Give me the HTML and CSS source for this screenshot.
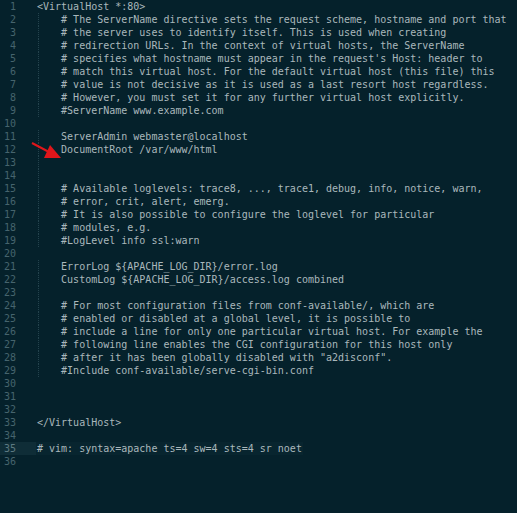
FILE: index.html
```html
<!DOCTYPE html>
<html>
<head>
<meta charset="utf-8">
<link rel="stylesheet" href="styles.css">
</head>
<body>
<div class="editor">
<div class="line"><span class="num">1</span><span class="code">&lt;VirtualHost *:80&gt;</span></div>
<div class="line g"><span class="num">2</span><span class="code">    # The ServerName directive sets the request scheme, hostname and port that</span></div>
<div class="line g"><span class="num">3</span><span class="code">    # the server uses to identify itself. This is used when creating</span></div>
<div class="line g"><span class="num">4</span><span class="code">    # redirection URLs. In the context of virtual hosts, the ServerName</span></div>
<div class="line g"><span class="num">5</span><span class="code">    # specifies what hostname must appear in the request's Host: header to</span></div>
<div class="line g"><span class="num">6</span><span class="code">    # match this virtual host. For the default virtual host (this file) this</span></div>
<div class="line g"><span class="num">7</span><span class="code">    # value is not decisive as it is used as a last resort host regardless.</span></div>
<div class="line g"><span class="num">8</span><span class="code">    # However, you must set it for any further virtual host explicitly.</span></div>
<div class="line g"><span class="num">9</span><span class="code">    #ServerName www.example.com</span></div>
<div class="line"><span class="num">10</span><span class="code"> </span></div>
<div class="line g"><span class="num">11</span><span class="code">    ServerAdmin webmaster@localhost</span></div>
<div class="line g"><span class="num">12</span><span class="code">    DocumentRoot /var/www/html</span></div>
<div class="line g"><span class="num">13</span><span class="code"> </span></div>
<div class="line g"><span class="num">14</span><span class="code"> </span></div>
<div class="line g"><span class="num">15</span><span class="code">    # Available loglevels: trace8, ..., trace1, debug, info, notice, warn,</span></div>
<div class="line g"><span class="num">16</span><span class="code">    # error, crit, alert, emerg.</span></div>
<div class="line g"><span class="num">17</span><span class="code">    # It is also possible to configure the loglevel for particular</span></div>
<div class="line g"><span class="num">18</span><span class="code">    # modules, e.g.</span></div>
<div class="line g"><span class="num">19</span><span class="code">    #LogLevel info ssl:warn</span></div>
<div class="line"><span class="num">20</span><span class="code"> </span></div>
<div class="line g"><span class="num">21</span><span class="code">    ErrorLog ${APACHE_LOG_DIR}/error.log</span></div>
<div class="line g"><span class="num">22</span><span class="code">    CustomLog ${APACHE_LOG_DIR}/access.log combined</span></div>
<div class="line g"><span class="num">23</span><span class="code"> </span></div>
<div class="line g"><span class="num">24</span><span class="code">    # For most configuration files from conf-available/, which are</span></div>
<div class="line g"><span class="num">25</span><span class="code">    # enabled or disabled at a global level, it is possible to</span></div>
<div class="line g"><span class="num">26</span><span class="code">    # include a line for only one particular virtual host. For example the</span></div>
<div class="line g"><span class="num">27</span><span class="code">    # following line enables the CGI configuration for this host only</span></div>
<div class="line g"><span class="num">28</span><span class="code">    # after it has been globally disabled with "a2disconf".</span></div>
<div class="line g"><span class="num">29</span><span class="code">    #Include conf-available/serve-cgi-bin.conf</span></div>
<div class="line"><span class="num">30</span><span class="code"> </span></div>
<div class="line"><span class="num">31</span><span class="code"> </span></div>
<div class="line"><span class="num">32</span><span class="code"> </span></div>
<div class="line"><span class="num">33</span><span class="code">&lt;/VirtualHost&gt;</span></div>
<div class="line"><span class="num">34</span><span class="code"> </span></div>
<div class="line current"><span class="num">35</span><span class="code"># vim: syntax=apache ts=4 sw=4 sts=4 sr noet</span></div>
<div class="line"><span class="num">36</span><span class="code"> </span></div>
<svg class="arrow" width="70" height="30" viewBox="0 0 70 30">
  <line x1="32" y1="3" x2="49" y2="12" stroke="#e0161b" stroke-width="2"/>
  <polygon points="50,5 44,18 61,18" fill="#e0161b"/>
</svg>
</div>
</body>
</html>
```
FILE: styles.css
```css
html, body {
  margin: 0;
  padding: 0;
  background: #05212b;
}
.editor {
  position: relative;
  width: 517px;
  height: 513px;
  background: #05212b;
  font-family: "DejaVu Sans Mono", "Liberation Mono", monospace;
  font-size: 10px;
  color: #aab8bc;
  overflow: hidden;
}
.line {
  display: flex;
  height: 13px;
  line-height: 13px;
}
.num {
  width: 16px;
  text-align: right;
  color: #46646d;
  flex: none;
}
.code {
  margin-left: 21px;
  white-space: pre;
  position: relative;
}
.line.g .code::before {
  content: "";
  position: absolute;
  left: 1px;
  top: 0;
  bottom: 0;
  border-left: 1px dotted #24434d;
}
.line.current {
  background: linear-gradient(to right, #0f2d37 0, #0f2d37 36px, #08252f 36px, #08252f 303px, transparent 303px);
}
.line.current .num {
  color: #5d7a82;
}
.arrow {
  position: absolute;
  left: 0;
  top: 140px;
}
```
